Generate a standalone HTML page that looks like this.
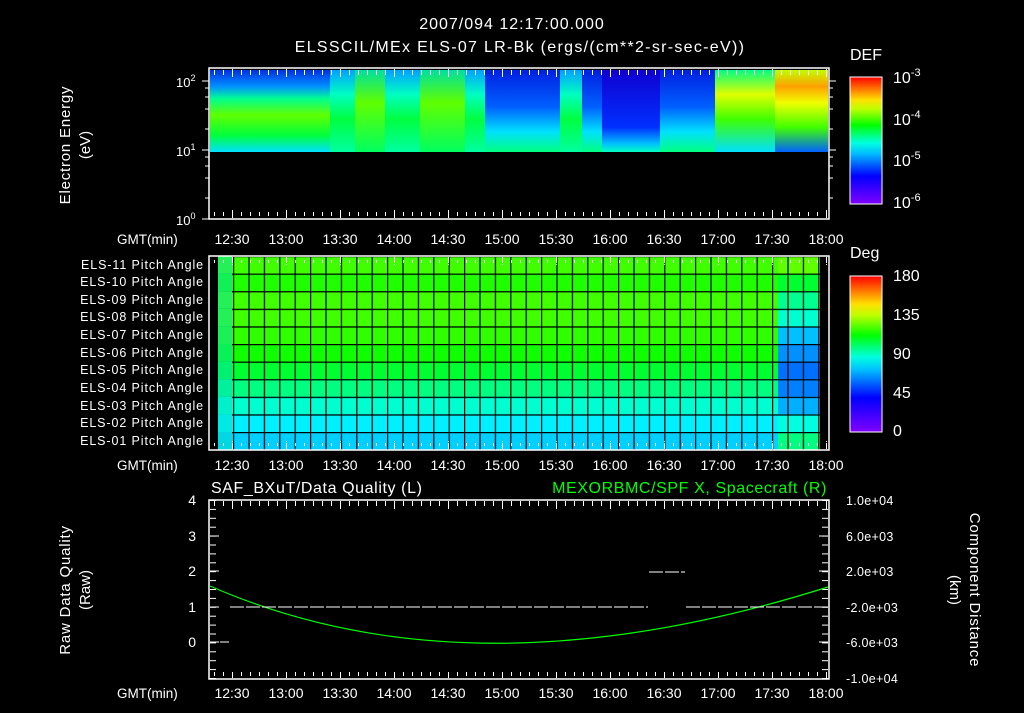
<!DOCTYPE html>
<html><head><meta charset="utf-8"><style>
html,body{margin:0;padding:0;background:#000;}
svg text{font-family:"Liberation Sans",sans-serif;fill:#fff;}
</style></head><body>
<svg width="1024" height="708" xmlns="http://www.w3.org/2000/svg">
<defs>
<linearGradient id="cb1" x1="0" y1="1" x2="0" y2="0">
<stop offset="0" stop-color="#8000ff"/><stop offset=".22" stop-color="#0000ff"/><stop offset=".4" stop-color="#00c0ff"/><stop offset=".48" stop-color="#00ffe0"/><stop offset=".62" stop-color="#00ff00"/><stop offset=".75" stop-color="#c0ff00"/><stop offset=".82" stop-color="#ffe000"/><stop offset="1" stop-color="#ff0000"/></linearGradient>
<linearGradient id="g1" x1="0" y1="0" x2="0" y2="1"><stop offset="0" stop-color="#0030e0"/><stop offset=".2" stop-color="#0090ff"/><stop offset=".35" stop-color="#00ff90"/><stop offset=".55" stop-color="#60ff00"/><stop offset=".8" stop-color="#00ff40"/><stop offset="1" stop-color="#00e0ff"/></linearGradient>
<linearGradient id="g2" x1="0" y1="0" x2="0" y2="1"><stop offset="0" stop-color="#00a0ff"/><stop offset=".3" stop-color="#00ffc0"/><stop offset=".6" stop-color="#00ff40"/><stop offset="1" stop-color="#00ffa0"/></linearGradient>
<linearGradient id="g3" x1="0" y1="0" x2="0" y2="1"><stop offset="0" stop-color="#00e0a0"/><stop offset=".4" stop-color="#60ff00"/><stop offset="1" stop-color="#00ff60"/></linearGradient>
<linearGradient id="g4" x1="0" y1="0" x2="0" y2="1"><stop offset="0" stop-color="#0020e0"/><stop offset=".45" stop-color="#0060ff"/><stop offset=".75" stop-color="#00e0ff"/><stop offset="1" stop-color="#00ff80"/></linearGradient>
<linearGradient id="g5" x1="0" y1="0" x2="0" y2="1"><stop offset="0" stop-color="#1000d0"/><stop offset=".7" stop-color="#0030ff"/><stop offset=".9" stop-color="#00c0ff"/><stop offset="1" stop-color="#00ffc0"/></linearGradient>
<linearGradient id="g6" x1="0" y1="0" x2="0" y2="1"><stop offset="0" stop-color="#00ff80"/><stop offset=".3" stop-color="#e0ff00"/><stop offset=".6" stop-color="#40ff00"/><stop offset="1" stop-color="#00e0ff"/></linearGradient>
<linearGradient id="g7" x1="0" y1="0" x2="0" y2="1"><stop offset="0" stop-color="#c0ff00"/><stop offset=".2" stop-color="#ffa000"/><stop offset=".4" stop-color="#f0ff00"/><stop offset=".7" stop-color="#40ff00"/><stop offset="1" stop-color="#0060ff"/></linearGradient>
<pattern id="tk" x="232" y="0" width="9" height="10" patternUnits="userSpaceOnUse"><rect x="0" y="0" width="1" height="6" fill="#fff"/></pattern>
<pattern id="tkM" x="232" y="0" width="54" height="12" patternUnits="userSpaceOnUse"><rect x="0" y="0" width="1" height="10" fill="#fff"/></pattern>
<pattern id="vtk" x="0" y="500" width="10" height="8.9" patternUnits="userSpaceOnUse"><rect x="0" y="0" width="10" height="1" fill="#fff"/></pattern>
<pattern id="grid" x="233" y="256" width="15.4" height="17.6" patternUnits="userSpaceOnUse"><rect x="0" y="0" width="1.2" height="17.6" fill="#000"/><rect x="0" y="0" width="15.4" height="1.2" fill="#000"/></pattern>
</defs>

<text x="512" y="29" font-size="16" text-anchor="middle" letter-spacing="1">2007/094 12:17:00.000</text>
<text x="520" y="52" font-size="16" text-anchor="middle" letter-spacing="1.3">ELSSCIL/MEx ELS-07 LR-Bk  (ergs/(cm**2-sr-sec-eV))</text>

<!-- TOP PANEL -->
<g>
<rect x="210" y="70" width="120" height="82" fill="url(#g1)"/>
<rect x="330" y="70" width="25" height="82" fill="url(#g2)"/>
<rect x="355" y="70" width="30" height="82" fill="url(#g3)"/>
<rect x="385" y="70" width="35" height="82" fill="url(#g2)"/>
<rect x="420" y="70" width="45" height="82" fill="url(#g3)"/>
<rect x="465" y="70" width="20" height="82" fill="url(#g2)"/>
<rect x="485" y="70" width="75" height="82" fill="url(#g4)"/>
<rect x="560" y="70" width="22" height="82" fill="url(#g2)"/>
<rect x="582" y="70" width="20" height="82" fill="url(#g4)"/>
<rect x="602" y="70" width="58" height="82" fill="url(#g5)"/>
<rect x="660" y="70" width="55" height="82" fill="url(#g4)"/>
<rect x="715" y="70" width="60" height="82" fill="url(#g6)"/>
<rect x="775" y="70" width="53" height="82" fill="url(#g7)"/>
<rect x="209" y="68" width="620" height="151" fill="none" stroke="#fff" stroke-width="1.5"/>
<rect x="210" y="69" width="618" height="6" fill="url(#tk)"/>
<rect x="210" y="69" width="618" height="8" fill="url(#tkM)"/>
<rect x="210" y="212" width="618" height="6" fill="url(#tk)"/>
<rect x="210" y="210" width="618" height="8" fill="url(#tkM)"/>
<g stroke="#fff" stroke-width="1">
<line x1="202" y1="81" x2="209" y2="81"/><line x1="202" y1="150" x2="209" y2="150"/><line x1="202" y1="219" x2="209" y2="219"/>
<line x1="205" y1="88" x2="209" y2="88"/><line x1="205" y1="97" x2="209" y2="97"/><line x1="205" y1="109" x2="209" y2="109"/><line x1="205" y1="129" x2="209" y2="129"/>
<line x1="205" y1="157" x2="209" y2="157"/><line x1="205" y1="166" x2="209" y2="166"/><line x1="205" y1="178" x2="209" y2="178"/><line x1="205" y1="198" x2="209" y2="198"/>
<line x1="829" y1="81" x2="836" y2="81"/><line x1="829" y1="150" x2="836" y2="150"/><line x1="829" y1="88" x2="833" y2="88"/><line x1="829" y1="97" x2="833" y2="97"/><line x1="829" y1="109" x2="833" y2="109"/><line x1="829" y1="129" x2="833" y2="129"/><line x1="829" y1="157" x2="833" y2="157"/><line x1="829" y1="166" x2="833" y2="166"/><line x1="829" y1="178" x2="833" y2="178"/><line x1="829" y1="198" x2="833" y2="198"/>
</g>
<text x="176" y="87" font-size="13">10<tspan dy="-6" font-size="9">2</tspan></text>
<text x="176" y="156" font-size="13">10<tspan dy="-6" font-size="9">1</tspan></text>
<text x="176" y="225" font-size="13">10<tspan dy="-6" font-size="9">0</tspan></text>
<text transform="translate(70,145) rotate(-90)" font-size="15" text-anchor="middle" letter-spacing="0.8">Electron Energy</text>
<text transform="translate(90,145) rotate(-90)" font-size="15" text-anchor="middle">(eV)</text>
<text x="850" y="60" font-size="16">DEF</text>
<rect x="850" y="77" width="32" height="127" fill="url(#cb1)" stroke="#fff" stroke-width="1"/>
<text x="893" y="83" font-size="16">10<tspan dy="-7" font-size="11">-3</tspan></text>
<text x="893" y="125" font-size="16">10<tspan dy="-7" font-size="11">-4</tspan></text>
<text x="893" y="166" font-size="16">10<tspan dy="-7" font-size="11">-5</tspan></text>
<text x="893" y="208" font-size="16">10<tspan dy="-7" font-size="11">-6</tspan></text>
</g>

<g font-size="14">
<text x="117" y="244" font-size="13.5">GMT(min)</text>
<text x="232" y="244" text-anchor="middle">12:30</text><text x="286" y="244" text-anchor="middle">13:00</text><text x="340" y="244" text-anchor="middle">13:30</text><text x="394" y="244" text-anchor="middle">14:00</text><text x="448" y="244" text-anchor="middle">14:30</text><text x="502" y="244" text-anchor="middle">15:00</text><text x="556" y="244" text-anchor="middle">15:30</text><text x="610" y="244" text-anchor="middle">16:00</text><text x="664" y="244" text-anchor="middle">16:30</text><text x="718" y="244" text-anchor="middle">17:00</text><text x="772" y="244" text-anchor="middle">17:30</text><text x="826" y="244" text-anchor="middle">18:00</text>
</g>

<!-- MIDDLE PANEL -->
<g>
<rect x="218" y="256" width="602" height="17.6" fill="#40ff00"/>
<rect x="218" y="273.6" width="602" height="17.6" fill="#20ff00"/>
<rect x="218" y="291.2" width="602" height="17.6" fill="#40ff00"/>
<rect x="218" y="308.8" width="602" height="17.6" fill="#40ff00"/>
<rect x="218" y="326.4" width="602" height="17.6" fill="#30ff00"/>
<rect x="218" y="344" width="602" height="17.6" fill="#10ff00"/>
<rect x="218" y="361.6" width="602" height="17.6" fill="#00ff30"/>
<rect x="218" y="379.2" width="602" height="17.6" fill="#00ff80"/>
<rect x="218" y="396.8" width="602" height="17.6" fill="#00ffd0"/>
<rect x="218" y="414.4" width="602" height="17.6" fill="#00f0ff"/>
<rect x="218" y="432" width="602" height="17.6" fill="#00d0ff"/>
<rect x="218" y="256" width="14" height="194" fill="#00e0c0" opacity=".45"/>
<rect x="778" y="256" width="42" height="17.6" fill="#60ff00"/>
<rect x="778" y="273.6" width="42" height="17.6" fill="#00ff30"/>
<rect x="778" y="291.2" width="42" height="17.6" fill="#00ff90"/>
<rect x="778" y="308.8" width="42" height="17.6" fill="#00ffd0"/>
<rect x="778" y="326.4" width="42" height="17.6" fill="#00c0ff"/>
<rect x="778" y="344" width="42" height="17.6" fill="#0090ff"/>
<rect x="778" y="361.6" width="42" height="17.6" fill="#0070ff"/>
<rect x="778" y="379.2" width="42" height="17.6" fill="#0080ff"/>
<rect x="778" y="396.8" width="42" height="17.6" fill="#00b0ff"/>
<rect x="778" y="414.4" width="42" height="17.6" fill="#00ffe0"/>
<rect x="778" y="432" width="42" height="17.6" fill="#00ff80"/>
<rect x="232" y="256" width="588" height="194" fill="url(#grid)"/>
<rect x="209" y="256" width="620" height="194" fill="none" stroke="#fff" stroke-width="1.5"/>
<rect x="210" y="257" width="618" height="6" fill="url(#tk)"/>
<rect x="210" y="257" width="618" height="8" fill="url(#tkM)"/>
<rect x="210" y="443" width="618" height="6" fill="url(#tk)"/>
<rect x="210" y="441" width="618" height="8" fill="url(#tkM)"/>
</g>
<g font-size="12.5" text-anchor="end" letter-spacing="0.9">
<text x="204" y="269">ELS-11 Pitch Angle</text><text x="204" y="286">ELS-10 Pitch Angle</text><text x="204" y="304">ELS-09 Pitch Angle</text><text x="204" y="321">ELS-08 Pitch Angle</text><text x="204" y="339">ELS-07 Pitch Angle</text><text x="204" y="357">ELS-06 Pitch Angle</text><text x="204" y="374">ELS-05 Pitch Angle</text><text x="204" y="392">ELS-04 Pitch Angle</text><text x="204" y="410">ELS-03 Pitch Angle</text><text x="204" y="427">ELS-02 Pitch Angle</text><text x="204" y="445">ELS-01 Pitch Angle</text>
</g>
<text x="850" y="258" font-size="16">Deg</text>
<rect x="850" y="276" width="32" height="156" fill="url(#cb1)" stroke="#fff" stroke-width="1"/>
<g font-size="16"><text x="893" y="281">180</text><text x="893" y="320">135</text><text x="893" y="359">90</text><text x="893" y="398">45</text><text x="893" y="436">0</text></g>
<g font-size="14">
<text x="117" y="470" font-size="13.5">GMT(min)</text>
<text x="232" y="470" text-anchor="middle">12:30</text><text x="286" y="470" text-anchor="middle">13:00</text><text x="340" y="470" text-anchor="middle">13:30</text><text x="394" y="470" text-anchor="middle">14:00</text><text x="448" y="470" text-anchor="middle">14:30</text><text x="502" y="470" text-anchor="middle">15:00</text><text x="556" y="470" text-anchor="middle">15:30</text><text x="610" y="470" text-anchor="middle">16:00</text><text x="664" y="470" text-anchor="middle">16:30</text><text x="718" y="470" text-anchor="middle">17:00</text><text x="772" y="470" text-anchor="middle">17:30</text><text x="826" y="470" text-anchor="middle">18:00</text>
</g>

<!-- BOTTOM PANEL -->
<text x="211" y="493" font-size="16" letter-spacing="0.6">SAF_BXuT/Data Quality (L)</text>
<text x="827" y="493" font-size="16" text-anchor="end" letter-spacing="0.6" style="fill:#00ff00">MEXORBMC/SPF X, Spacecraft (R)</text>
<rect x="209" y="500" width="620" height="179" fill="none" stroke="#fff" stroke-width="1.5"/>
<rect x="210" y="501" width="618" height="6" fill="url(#tk)"/>
<rect x="210" y="501" width="618" height="8" fill="url(#tkM)"/>
<rect x="210" y="672" width="618" height="6" fill="url(#tk)"/>
<rect x="210" y="670" width="618" height="8" fill="url(#tkM)"/>
<rect x="210" y="500" width="6" height="179" fill="url(#vtk)"/>
<rect x="822" y="500" width="6" height="179" fill="url(#vtk)"/>
<g stroke="#fff" stroke-width="1">
<line x1="210" y1="536" x2="219" y2="536"/><line x1="210" y1="571" x2="219" y2="571"/><line x1="210" y1="607" x2="219" y2="607"/><line x1="210" y1="642" x2="219" y2="642"/>
<line x1="819" y1="536" x2="828" y2="536"/><line x1="819" y1="571" x2="828" y2="571"/><line x1="819" y1="607" x2="828" y2="607"/><line x1="819" y1="642" x2="828" y2="642"/>
</g>
<path d="M210 586 Q470 700 828 587" fill="none" stroke="#00ff00" stroke-width="1.2"/>
<g stroke="#fff" stroke-width="1" stroke-dasharray="14 2">
<line x1="230" y1="607" x2="648" y2="607"/><line x1="686" y1="607" x2="820" y2="607"/><line x1="649" y1="572" x2="685" y2="572"/>
</g>
<line x1="220" y1="642" x2="229" y2="642" stroke="#fff"/>
<g font-size="14" text-anchor="end"><text x="196" y="505">4</text><text x="196" y="541">3</text><text x="196" y="576">2</text><text x="196" y="612">1</text><text x="196" y="647">0</text></g>
<g font-size="12.5" letter-spacing="0.3"><text x="846" y="505">1.0e+04</text><text x="846" y="541">6.0e+03</text><text x="846" y="576">2.0e+03</text><text x="846" y="612">-2.0e+03</text><text x="846" y="647">-6.0e+03</text><text x="846" y="683">-1.0e+04</text></g>
<text transform="translate(70,590) rotate(-90)" font-size="15" text-anchor="middle" letter-spacing="0.8">Raw Data Quality</text>
<text transform="translate(90,590) rotate(-90)" font-size="15" text-anchor="middle">(Raw)</text>
<text transform="translate(970,590) rotate(90)" font-size="15" text-anchor="middle" letter-spacing="0.8">Component Distance</text>
<text transform="translate(950,590) rotate(90)" font-size="15" text-anchor="middle">(km)</text>
<g font-size="14">
<text x="117" y="698" font-size="13.5">GMT(min)</text>
<text x="232" y="698" text-anchor="middle">12:30</text><text x="286" y="698" text-anchor="middle">13:00</text><text x="340" y="698" text-anchor="middle">13:30</text><text x="394" y="698" text-anchor="middle">14:00</text><text x="448" y="698" text-anchor="middle">14:30</text><text x="502" y="698" text-anchor="middle">15:00</text><text x="556" y="698" text-anchor="middle">15:30</text><text x="610" y="698" text-anchor="middle">16:00</text><text x="664" y="698" text-anchor="middle">16:30</text><text x="718" y="698" text-anchor="middle">17:00</text><text x="772" y="698" text-anchor="middle">17:30</text><text x="826" y="698" text-anchor="middle">18:00</text>
</g>
</svg>
</body></html>
